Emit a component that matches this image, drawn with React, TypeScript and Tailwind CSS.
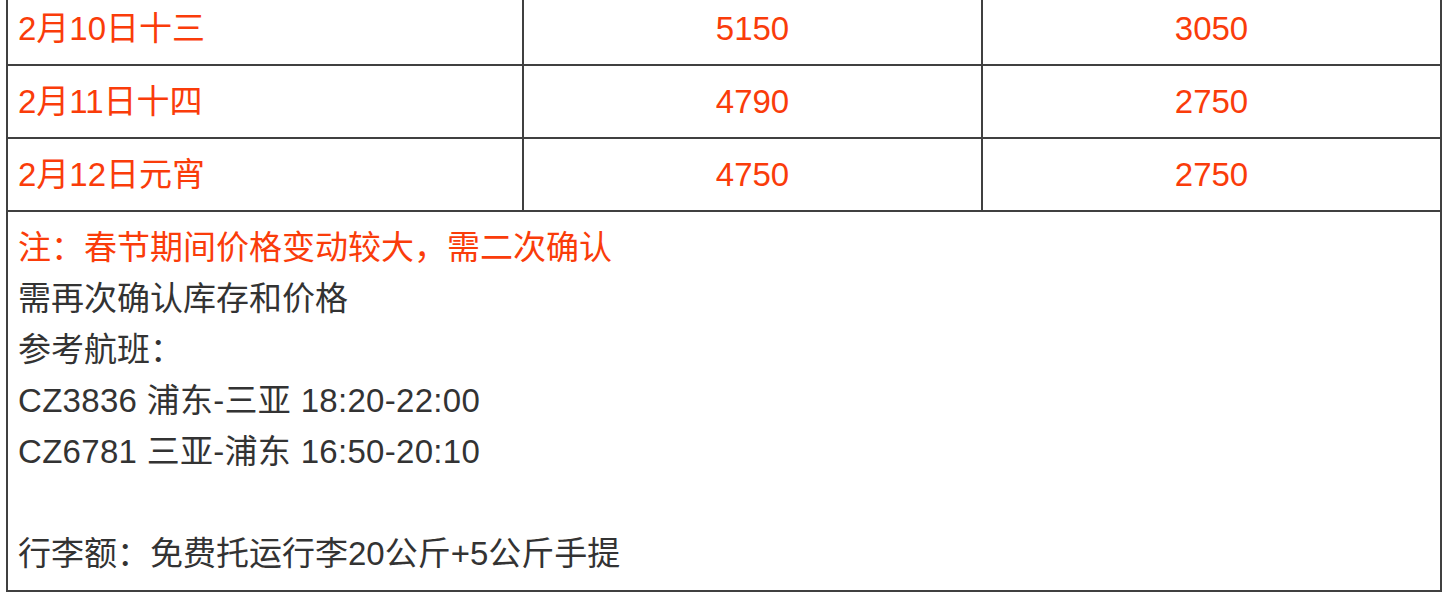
import React from "react";

const rows = [
  { d: "2月10日十三", a: "5150", b: "3050" },
  { d: "2月11日十四", a: "4790", b: "2750" },
  { d: "2月12日元宵", a: "4750", b: "2750" },
];

export default function App() {
  return (
    <div
      className="min-h-[597px] w-[1447px] overflow-hidden bg-white"
      style={{ fontFamily: '"Liberation Sans", Arial, "Noto Sans CJK SC", sans-serif' }}
    >
      <div className="ml-[6px] mt-[-9px] w-[1436px] border-2 border-[#404040] text-[33px] leading-[51px]">
        {rows.map((r) => (
          <div key={r.d} className="flex border-b-2 border-[#404040] text-[#fa3c0a]">
            <div className="w-[516px] shrink-0 border-r-2 border-[#404040] px-[10px] py-[10px]">{r.d}</div>
            <div className="w-[459px] shrink-0 border-r-2 border-[#404040] px-[10px] py-[10px] text-center">{r.a}</div>
            <div className="flex-1 px-[10px] py-[10px] text-center">{r.b}</div>
          </div>
        ))}
        <div className="px-[10px] pt-[10px] pb-[11px] text-[#333333]">
          <div className="text-[#fa3c0a]">注：春节期间价格变动较大，需二次确认</div>
          <div>需再次确认库存和价格</div>
          <div>参考航班：</div>
          <div className="tracking-[0.3px]">CZ3836 浦东-三亚 18:20-22:00</div>
          <div className="tracking-[0.3px]">CZ6781 三亚-浦东 16:50-20:10</div>
          <div className="h-[51px]"></div>
          <div>行李额：免费托运行李20公斤+5公斤手提</div>
        </div>
      </div>
    </div>
  );
}
